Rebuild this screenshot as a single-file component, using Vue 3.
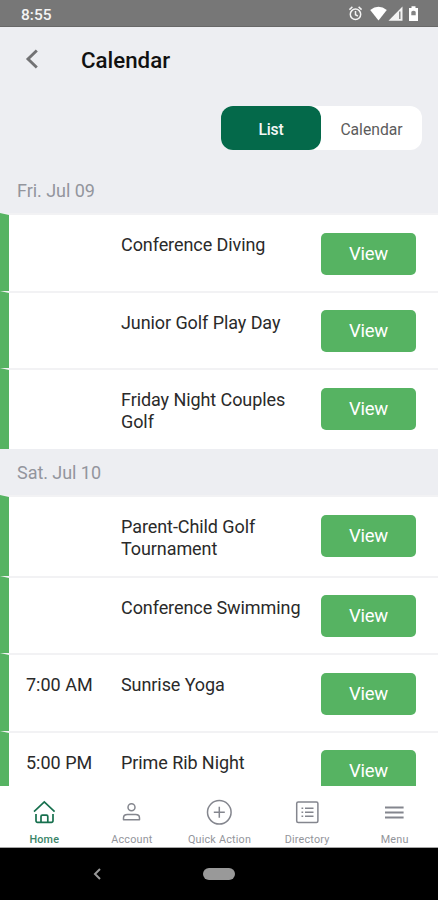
<script setup>
const days = [
  {
    label: "Fri. Jul 09",
    events: [
      { time: "", lines: ["Conference Diving"] },
      { time: "", lines: ["Junior Golf Play Day"] },
      { time: "", lines: ["Friday Night Couples", "Golf"] },
    ],
  },
  {
    label: "Sat. Jul 10",
    events: [
      { time: "", lines: ["Parent-Child Golf", "Tournament"] },
      { time: "", lines: ["Conference Swimming"] },
      { time: "7:00 AM", lines: ["Sunrise Yoga"] },
      { time: "5:00 PM", lines: ["Prime Rib Night"] },
    ],
  },
];

const tabs = ["Home", "Account", "Quick Action", "Directory", "Menu"];
</script>

<template>
  <div class="phone">
    <div class="status">
      <span class="clock">8:55</span>
      <svg class="status-icons" width="72" height="18" viewBox="0 0 72 18">
        <!-- alarm -->
        <g fill="none" stroke="#f4f4f4" stroke-width="1.5">
          <circle cx="6.5" cy="9.3" r="5.2" />
          <path d="M6.5 6.1v3.6l2.4 1.4M.4 4.6l3-2.7M12.6 4.6l-3-2.7" />
        </g>
        <!-- wifi -->
        <path d="M21.2 5Q29.5-1.600 37.8 5L29.5 15.4Z" fill="#fff" />
        <!-- signal -->
        <path d="M53.5 1.5V15.7H39.5Z" fill="#f4f4f4" />
        <path d="M50.8 6.5V14" stroke="#777" stroke-width="1.3" />
        <!-- battery -->
        <path d="M62.5 1.2h4v1.8h2.5v13h-9V3h2.5z" fill="#fff" />
        <path d="M62.3 6.8q2.2-2.200 4.4 0v3.400h-4.400z" fill="#858585" />
      </svg>
    </div>

    <header class="header">
      <svg class="back" width="14" height="20" viewBox="0 0 14 20">
        <path d="M11.8 1.5 3 10l8.8 8.5" fill="none" stroke="#727274" stroke-width="2.9" />
      </svg>
      <h1 class="title">Calendar</h1>
    </header>

    <div class="switcher">
      <button class="option active">List</button>
      <button class="option">Calendar</button>
    </div>

    <main class="list">
      <section v-for="day in days" :key="day.label">
        <h2 class="day">{{ day.label }}</h2>
        <div v-for="event in day.events" :key="event.lines[0]" class="event" :class="{ tall: event.lines.length > 1 }">
          <span class="time">{{ event.time }}</span>
          <div class="name">
            <div v-for="line in event.lines" :key="line">{{ line }}</div>
          </div>
          <button class="view">View</button>
        </div>
      </section>
    </main>

    <nav class="tabs">
      <div v-for="(tab, i) in tabs" :key="tab" class="tab" :class="{ current: i === 0 }">
        <svg width="28" height="28" viewBox="0 0 28 28" fill="none" stroke="currentColor" stroke-width="1.5">
          <g v-if="tab === 'Home'" stroke-width="1.7">
            <path d="M4 13.7 14.3 4l10.3 9.7" />
            <path d="M6 16v6.8a1.5 1.5 0 0 0 1.5 1.5h14a1.5 1.5 0 0 0 1.5-1.5V16" />
            <path d="M11 24v-5.5a1.3 1.3 0 0 1 1.3-1.3h4.2a1.3 1.3 0 0 1 1.3 1.3V24" />
          </g>
          <g v-else-if="tab === 'Account'">
            <circle cx="14.5" cy="9.2" r="3.5" />
            <path d="M6.5 21.7v-1.800q0-3.400 3.900-3.400h8.200q3.900 0 3.900 3.400v1.800z" stroke-linejoin="round" />
          </g>
          <g v-else-if="tab === 'Quick Action'">
            <circle cx="14.3" cy="14.3" r="11.8" />
            <path d="M14.3 8.8v11M8.8 14.3h11" />
          </g>
          <g v-else-if="tab === 'Directory'">
            <rect x="3.7" y="4" width="21.2" height="20.4" rx="1.5" />
            <path d="M12 10.2h8.5M12 14.2h8.5M12 18.2h8.5M8.500 10.200h1.700M8.500 14.200h1.700M8.500 18.200h1.700" />
          </g>
          <path v-else d="M5 9.5h18.6M5 14.5h18.6M5 19.5h18.6" stroke-width="2" />
        </svg>
        <span class="tab-label">{{ tab }}</span>
      </div>
    </nav>

    <footer class="system">
      <svg class="system-back" width="10" height="14" viewBox="0 0 10 14">
        <path d="M8 2 3 7l5 5" fill="none" stroke="#999" stroke-width="2" />
      </svg>
      <span class="pill"></span>
    </footer>
  </div>
</template>

<style>
body {
  margin: 0;
}
</style>

<style scoped>
.phone {
  display: flex;
  flex-direction: column;
  width: 438px;
  height: 900px;
  overflow: hidden;
  background: #edeef2;
  color: #2a2a2a;
  font-family: Roboto, "Liberation Sans", sans-serif;
}

button {
  border: 0;
  padding: 0;
  font-family: inherit;
}

.status {
  display: flex;
  flex: none;
  justify-content: space-between;
  box-sizing: border-box;
  height: 27px;
  padding: 5px 17px 0 21px;
  border-bottom: 1px solid #686868;
  background: #777;
  color: #f4f4f4;
}

.clock {
  font-size: 15.5px;
  font-weight: 500;
  line-height: 20px;
}

.header {
  display: flex;
  flex: none;
  align-items: center;
  height: 63px;
  padding-left: 25px;
}

.title {
  margin: 2px 0 0 42px;
  color: #111;
  font-size: 22.3px;
  font-weight: 500;
}

.switcher {
  display: flex;
  flex: none;
  align-self: flex-end;
  width: 201px;
  height: 44px;
  margin: 16px 16px 0 0;
  border-radius: 12px;
  background: #fff;
}

.option {
  flex: 1;
  padding-top: 2px;
  border-radius: 12px;
  background: none;
  color: #5c5c5c;
  font-size: 15.7px;
}

.option.active {
  flex: none;
  width: 100px;
  background: #04694a;
  color: #f4f8f6;
  font-weight: 500;
  letter-spacing: -0.2px;
}

.list {
  flex: 1;
  min-height: 0;
  margin-top: 16.5px;
  overflow: hidden;
}

.day {
  height: 46.5px;
  margin: 0;
  padding-left: 17px;
  color: #93959d;
  font-size: 18px;
  font-weight: 400;
  line-height: 48px;
  letter-spacing: -0.05px;
}

.event {
  display: flex;
  align-items: flex-start;
  box-sizing: border-box;
  height: 77.5px;
  border-top: 2px solid #f2f2f4;
  border-left: 9px solid #56b362;
  background: #fff;
}

.event.tall {
  height: 80.5px;
}

.time {
  width: 95px;
  margin: 19px 0 0 17px;
  font-size: 18px;
  line-height: 21.5px;
}

.name {
  flex: 1;
  margin-top: 19px;
  font-size: 18px;
  line-height: 21.5px;
  letter-spacing: -0.08px;
  white-space: nowrap;
}

.view {
  width: 95px;
  height: 42px;
  margin: 17.5px 22px 0 0;
  border-radius: 5px;
  background: #56b362;
  color: #fff;
  font-size: 18.5px;
  letter-spacing: -0.3px;
}

.tabs {
  display: flex;
  flex: none;
  box-sizing: border-box;
  height: 62px;
  border-bottom: 1px solid #a5a5a5;
  background: #fff;
}

.tab {
  display: flex;
  flex: 1;
  flex-direction: column;
  align-items: center;
  padding-top: 12px;
  color: #84868e;
}

.tab.current {
  color: #17704e;
}

.tab-label {
  margin-top: 6px;
  padding-left: 1px;
  color: #93959b;
  font-size: 10.8px;
  line-height: 15px;
  letter-spacing: 0.2px;
}

.current .tab-label {
  color: #3b8468;
  font-weight: 500;
}

.system {
  display: grid;
  flex: none;
  grid-template-columns: 1fr auto 1fr;
  align-items: center;
  height: 52px;
  background: #000;
}

.system-back {
  margin-left: 92px;
}

.pill {
  width: 32px;
  height: 12px;
  border-radius: 6px;
  background: #999;
}
</style>
